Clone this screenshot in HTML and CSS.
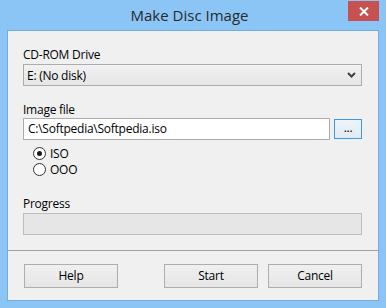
FILE: index.html
```html
<!doctype html>
<html lang="en">
    <head>
        <meta charset="UTF-8" />
        <title>Make Disc Image</title>
        <link rel="stylesheet" href="styles.css">
    </head>
    <body>
        <div class="window">
            <div class="titlebar">
                <span class="title">Make Disc Image</span>
                <span class="close">
                    <svg width="10" height="9" viewBox="0 0 10 9">
                        <path d="M1 0.5 L9 8.5 M9 0.5 L1 8.5" stroke="#fff" stroke-width="2" />
                    </svg>
                </span>
            </div>
            <div class="client">
                <div class="main">
                    <div class="label">CD-ROM Drive</div>
                    <div class="select">
                        <span>E: (No disk)</span>
                        <svg width="9" height="6" viewBox="0 0 9 6">
                            <path d="M1 1 L4.5 4.5 L8 1" stroke="#404040" stroke-width="2" fill="none" />
                        </svg>
                    </div>

                    <div class="label spaced">Image file</div>
                    <div class="file-row">
                        <div class="textbox">C:\Softpedia\Softpedia.iso</div>
                        <div class="browse">...</div>
                    </div>
                    <div class="radios">
                        <div class="radio"><span class="dot checked"></span>ISO</div>
                        <div class="radio"><span class="dot"></span>OOO</div>
                    </div>

                    <div class="label progress-label">Progress</div>
                    <div class="progress"></div>
                </div>
                <div class="footer">
                    <div class="button">Help</div>
                    <div class="button push">Start</div>
                    <div class="button">Cancel</div>
                </div>
            </div>
        </div>
    </body>
</html>
```

FILE: styles.css
```css
body {
    margin: 0;
    padding: 0;
    font-family: "Open Sans", "Noto Sans", sans-serif;
    font-size: 12px;
    letter-spacing: -0.25px;
    color: #000;
}
.window {
    width: 386px;
    height: 308px;
    box-sizing: border-box;
    background: #8ac5f6;
    padding: 0 7px 7px 7px;
}
.titlebar {
    height: 30px;
    display: grid;
    grid-template-columns: 1fr auto 1fr;
    align-items: start;
    margin: 0 -7px;
    padding-right: 7px;
}
.title {
    grid-column: 2;
    font-size: 15px;
    letter-spacing: 0;
    line-height: 30px;
    color: #2a2a2a;
}
.close {
    grid-column: 3;
    justify-self: end;
    margin-top: 1px;
    width: 31px;
    height: 20px;
    background: #c75050;
    display: flex;
    align-items: center;
    justify-content: center;
}
.client {
    background: #f0f0f0;
    border: 1px solid #74acdc;
}
.main {
    padding: 16px 16px 15px 15px;
}
.label {
    line-height: 16px;
    height: 16px;
}
.spaced {
    margin-top: 16px;
}
.progress-label {
    margin-top: 19px;
}
.select {
    margin-top: 1px;
    height: 22px;
    box-sizing: border-box;
    border: 1px solid #acacac;
    background: linear-gradient(to bottom, #f2f2f2, #e5e5e5);
    display: flex;
    align-items: center;
    justify-content: space-between;
    padding: 0 5px 0 3px;
}
.file-row {
    display: flex;
    align-items: center;
    gap: 4px;
}
.textbox {
    flex: 1;
    height: 22px;
    box-sizing: border-box;
    border: 1px solid #acacac;
    background: #fff;
    padding-left: 4px;
    line-height: 20px;
}
.browse {
    width: 28px;
    height: 20px;
    box-sizing: border-box;
    border: 1px solid #3c9be8;
    background: linear-gradient(to bottom, #eef4fa, #e1ebf5);
    text-align: center;
    line-height: 16px;
}
.radios {
    margin-top: 5px;
    padding-left: 10px;
}
.radio {
    height: 16px;
    display: flex;
    align-items: center;
    gap: 4px;
}
.dot {
    width: 13px;
    height: 13px;
    box-sizing: border-box;
    border: 1px solid #333;
    border-radius: 50%;
    background: #fff;
    display: flex;
    align-items: center;
    justify-content: center;
}
.dot.checked::after {
    content: "";
    width: 5px;
    height: 5px;
    border-radius: 50%;
    background: #1a1a1a;
}
.progress {
    margin-top: 1px;
    height: 22px;
    box-sizing: border-box;
    border: 1px solid #bcbcbc;
    background: #e6e6e6;
}
.footer {
    border-top: 1px solid #a0a0a0;
    padding: 13px 16px 12px 16px;
    display: flex;
    gap: 10px;
}
.button {
    width: 94px;
    height: 24px;
    box-sizing: border-box;
    border: 1px solid #adadad;
    background: linear-gradient(to bottom, #f0f0f0, #e5e5e5);
    text-align: center;
    line-height: 22px;
}
.push {
    margin-left: auto;
}
```
